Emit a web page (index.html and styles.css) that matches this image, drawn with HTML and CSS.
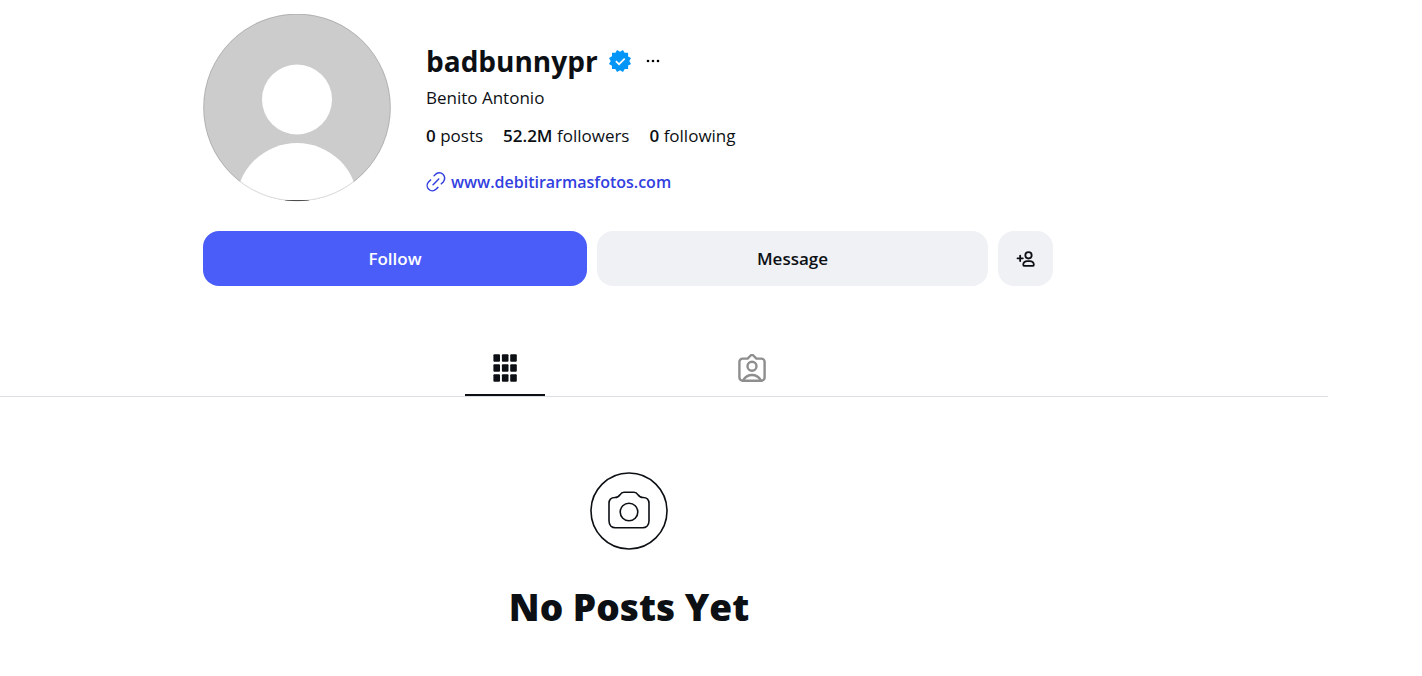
FILE: index.html
```
<!DOCTYPE html>
<html lang="en">
<head>
<meta charset="utf-8">
<meta name="viewport" content="width=device-width, initial-scale=1">
<title>badbunnypr</title>
<link rel="stylesheet" href="styles.css">
</head>
<body>
<main class="page">
  <header class="profile">
    <div class="summary">
      <svg class="avatar" viewBox="0 0 188 188" role="img" aria-label="Profile picture">
        <defs><clipPath id="round"><circle cx="94" cy="93.500" r="93.800"/></clipPath></defs>
        <g clip-path="url(#round)">
          <rect width="188" height="188" fill="#ccc"/>
          <circle cx="94" cy="85.5" r="35" fill="#fff"/>
          <circle cx="94" cy="190" r="61" fill="#fff"/>
          <path d="M82 186.500h24" stroke="#555" stroke-width="1"/>
        </g>
        <circle cx="94" cy="93.500" r="93.300" fill="none" stroke="#000" stroke-opacity=".13"/>
      </svg>
      <div class="details">
        <div class="title">
          <h1 class="username">badbunnypr</h1>
          <svg class="verified" viewBox="0 0 40 40" role="img" aria-label="Verified"><path fill="#0095f6" fill-rule="evenodd" d="M19.998 3.094 14.638 0l-2.972 5.15H5.432v6.354L0 14.64 3.094 20 0 25.359l5.432 3.137v5.905h5.975L14.638 40l5.36-3.094L25.358 40l3.232-5.6h6.162v-6.01L40 25.359 36.905 20 40 14.641l-5.248-3.03v-6.46h-6.419L25.358 0l-5.36 3.094Zm7.415 11.225 2.254 2.287-11.43 11.5-6.835-6.93 2.244-2.258 4.587 4.581 9.18-9.18Z"/></svg>
          <button class="more" type="button" aria-label="Options"><svg viewBox="0 0 14 4"><circle cx="2" cy="2" r="1.3"/><circle cx="7" cy="2" r="1.3"/><circle cx="12" cy="2" r="1.3"/></svg></button>
        </div>
        <p class="fullname">Benito Antonio</p>
        <ul class="stats">
          <li><strong>0</strong> posts</li>
          <li><strong>52.2M</strong> followers</li>
          <li><strong>0</strong> following</li>
        </ul>
        <a class="website" href="#website">
          <svg viewBox="0 0 24 24" fill="none" stroke="currentColor" stroke-width="1.800" stroke-linecap="round"><path d="m9.7 4.500 1.500-1.400a6.300 6.300 0 0 1 9.500 8.800l-2.300 2.300M14.300 18.500 12 20.700a6.300 6.300 0 0 1-9-8.800l2.500-2.400M8.500 15.300l6.800-6.800"/></svg>
          <span>www.debitirarmasfotos.com</span>
        </a>
      </div>
    </div>
    <div class="actions">
      <button class="button follow" type="button">Follow</button>
      <button class="button message" type="button">Message</button>
      <button class="button suggest" type="button" aria-label="Similar accounts"><svg viewBox="0 0 24 24" fill="none" stroke="#0c1014" stroke-width="2.200"><circle cx="15" cy="7.600" r="3.800"/><path d="M8.700 18.800c0-2.700 2.300-4.300 4.800-4.300h3c2.500 0 4.900 1.600 4.900 4.300 0 1-.7 1.500-1.600 1.500h-9.500c-.9 0-1.600-.5-1.600-1.500z"/><path d="M5 8v6.400M1.800 11.200h6.400" stroke-linecap="round"/></svg></button>
    </div>
  </header>
  <nav class="tabs" aria-label="Profile sections">
    <div class="tablist">
      <a class="tab active" href="#posts" aria-label="Posts"><svg viewBox="0 0 24 28" fill="#0c1014"><rect x=".4" y=".2" width="6.600" height="7.600" rx="1"/><rect x="8.900" y=".2" width="6.600" height="7.600" rx="1"/><rect x="17.200" y=".2" width="6.600" height="7.600" rx="1"/><rect x=".4" y="10.200" width="6.600" height="7.600" rx="1"/><rect x="8.900" y="10.200" width="6.600" height="7.600" rx="1"/><rect x="17.200" y="10.200" width="6.600" height="7.600" rx="1"/><rect x=".4" y="20.200" width="6.600" height="7.600" rx="1"/><rect x="8.900" y="20.200" width="6.600" height="7.600" rx="1"/><rect x="17.200" y="20.200" width="6.600" height="7.600" rx="1"/></svg></a>
      <a class="tab" href="#tagged" aria-label="Tagged"><svg viewBox="0 0 28 28" fill="none" stroke="#8e8e8e" stroke-width="2.4" stroke-linejoin="round" stroke-linecap="round"><path d="M9.600 4.600 12.700 1.500a1.800 1.800 0 0 1 2.600 0l3.100 3.100h5a3.200 3.200 0 0 1 3.200 3.200v15.700a3.200 3.200 0 0 1-3.200 3.200H4.600a3.200 3.200 0 0 1-3.200-3.200V7.800a3.200 3.200 0 0 1 3.200-3.200z"/><circle cx="14" cy="12.200" r="4.500"/><path d="M5.300 26.200c1.800-3.200 5-5.200 8.700-5.200s6.900 2 8.700 5.200"/></svg></a>
    </div>
  </nav>
  <section class="empty">
    <svg class="camera" viewBox="0 0 78 78" fill="none" stroke="#0c1014" stroke-width="1.600" stroke-linejoin="round"><circle cx="39" cy="39" r="38"/><circle cx="39" cy="40" r="8.800"/><path d="M25 25.500c2.500 0 3.800-.8 5-2.700 1-1.700 2.200-2.600 4-2.600h10c1.800 0 3 .9 4 2.600 1.200 1.900 2.500 2.700 5 2.700 4 0 6 2.500 6 6v17.300c0 4.200-2.600 7-6.500 7h-27c-3.900 0-6.500-2.800-6.500-7V31.500c0-3.500 2-6 6-6z"/></svg>
    <h2 class="empty-title">No Posts Yet</h2>
  </section>
</main>
</body>
</html>
```

FILE: styles.css
```
* { box-sizing: border-box; }

body {
  margin: 0;
  background: #fff;
  color: #0c1014;
  font: 17px/24px "Segoe UI", "Open Sans", "Noto Sans", sans-serif;
}

h1, h2, p, ul { margin: 0; padding: 0; }

button {
  border: 0;
  padding: 0;
  font: inherit;
  color: inherit;
  cursor: pointer;
}

svg { display: block; flex: none; }

.page { margin-right: 94px; }

.profile, .empty {
  max-width: 850px;
  margin-left: 203px;
}

.profile { padding-top: 14px; }

.summary {
  display: flex;
  gap: 35px;
}

.avatar { width: 188px; height: 188px; }

.details {
  min-width: 0;
  padding-top: 27px;
}

.title {
  display: flex;
  align-items: center;
  height: 40px;
}

.username {
  font-size: 28px;
  line-height: 40px;
  font-weight: 700;
}

.verified {
  width: 22px;
  height: 22px;
  margin-left: 11px;
}

.more {
  margin-left: 15px;
  background: none;
}

.more svg { width: 14px; height: 4px; }

.fullname { margin-top: 5px; }

.stats {
  display: flex;
  gap: 20px;
  margin-top: 14px;
  list-style: none;
}

.stats strong { font-weight: 600; }

.website {
  display: inline-flex;
  align-items: center;
  gap: 5px;
  margin-top: 22px;
  color: #3240e0;
  font-size: 16px;
  font-weight: 600;
  text-decoration: none;
}

.website svg { width: 20px; height: 20px; }

.actions {
  display: grid;
  grid-template-columns: 384fr 391fr 55px;
  gap: 10px;
  margin-top: 29px;
}

.button {
  display: flex;
  align-items: center;
  justify-content: center;
  height: 55px;
  border-radius: 16px;
  background: #f0f1f5;
  font-weight: 600;
}

.follow { background: #4a5df9; color: #fff; }

.suggest svg { width: 20px; height: 20px; }

.tabs {
  margin-top: 54px;
  border-bottom: 1px solid #dbdfe4;
}

.tablist {
  display: flex;
  justify-content: space-around;
  width: 494px;
  margin-left: 381px;
}

.tab {
  display: flex;
  justify-content: center;
  width: 80px;
  height: 56px;
  padding-top: 14px;
  border-bottom: 2px solid transparent;
}

.tab.active { border-bottom-color: #0c1014; }

.tab svg { height: 28px; }

.empty {
  display: flex;
  flex-direction: column;
  align-items: center;
  margin-left: 204px;
  padding-top: 75px;
}

.camera { width: 78px; height: 78px; }

.empty-title {
  margin-top: 33px;
  font-size: 37px;
  line-height: 48px;
  font-weight: 800;
}
```
